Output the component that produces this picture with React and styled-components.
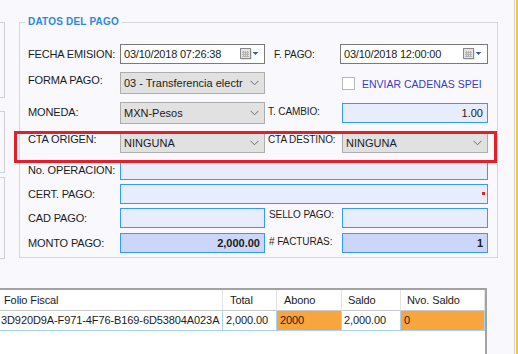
import React from "react";
import styled, { createGlobalStyle } from "styled-components";

const GlobalStyle = createGlobalStyle`
  html, body {
    margin: 0;
    padding: 0;
    background: #f9f9fd;
  }
  body {
    font-family: "Liberation Sans", Arial, sans-serif;
    font-size: 11px;
    color: #1b1b1b;
    overflow: hidden;
  }
`;

const Page = styled.div`
  display: flex;
  width: 518px;
  height: 354px;
  overflow: hidden;
`;

const Main = styled.div`
  width: 514px;
  display: flex;
  flex-direction: column;
`;

const EdgeRule = styled.div`
  width: 1px;
  background: #d4d4d8;
  margin-right: 1px;
`;

const YellowEdge = styled.div`
  width: 2px;
  background: #f1c83a;
`;

const TopArea = styled.div`
  display: flex;
  height: 288px;
  padding-top: 15px;
  box-sizing: border-box;
`;

const SidePanels = styled.div`
  width: 5px;
  display: flex;
  flex-direction: column;
  padding-top: 7px;
`;

const SideBox = styled.div`
  box-sizing: border-box;
  width: 5px;
  height: ${(p) => p.$h}px;
  margin-top: ${(p) => p.$gap || 0}px;
  border: 1px solid #cfcfd4;
  border-left: none;
`;

const Fieldset = styled.fieldset`
  margin: 0 0 0 14px;
  padding: 11px 9px 1px 8px;
  border: 1px solid #d6d6da;
  width: 460px;
  min-width: 0;
  align-self: flex-start;
`;

const Legend = styled.legend`
  margin-left: -3px;
  padding: 0 3px;
  line-height: 14px;
  font-size: 10px;
  font-weight: bold;
  letter-spacing: 0.2px;
  color: #2f86e0;
`;

const Grid = styled.div`
  position: relative;
  display: grid;
  grid-template-columns: 92px 145px 77px 146px;
  grid-template-rows: 28px 29px 31px 30px 23px 25px 24px 26px;
  align-items: center;
`;

const Label = styled.span`
  white-space: nowrap;
  padding-left: ${(p) => p.$indent || 0}px;
  margin-bottom: ${(p) => p.$lift || 0}px;
  font-size: ${(p) => (p.$small ? 10 : 11)}px;
  letter-spacing: ${(p) => (p.$small ? -0.1 : -0.15)}px;
`;

const DateBox = styled.div`
  box-sizing: border-box;
  height: 20px;
  margin-left: ${(p) => (p.$pull ? -2 : 0)}px;
  display: flex;
  align-items: center;
  padding: 0 5px 0 3px;
  background: #ffffff;
  border: 1px solid #7a7a7a;
  letter-spacing: -0.2px;
`;

const DateText = styled.span`
  flex: 1;
`;

const Select = styled.div`
  box-sizing: border-box;
  height: ${(p) => p.$h || 22}px;
  display: flex;
  align-items: center;
  justify-content: space-between;
  padding: 0 5px 0 3px;
  background: #e1e1e1;
  border: 1px solid #adadad;
  overflow: hidden;
  white-space: nowrap;
`;

const SelectText = styled.span`
  overflow: hidden;
`;

const TextBox = styled.div`
  box-sizing: border-box;
  height: 20px;
  grid-column: ${(p) => p.$span || "auto"};
  display: flex;
  align-items: center;
  justify-content: flex-end;
  padding: 0 4px;
  background: ${(p) => (p.$strong ? "#ccd6f8" : "#e7edfc")};
  border: 1px solid #3399ff;
  font-weight: ${(p) => (p.$strong ? "bold" : "normal")};
`;

const ErrorDot = styled.span`
  width: 3px;
  height: 3px;
  background: #e3202a;
  margin-right: -2px;
`;

const CheckRow = styled.label`
  grid-column: 3 / 5;
  justify-self: end;
  width: 146px;
  display: flex;
  align-items: center;
  gap: 7px;
  color: #3a3ad0;
  font-size: 10.5px;
  margin-top: 2px;
`;

const CheckBox = styled.span`
  box-sizing: border-box;
  width: 13px;
  height: 13px;
  background: #ffffff;
  border: 1px solid #b8b8b8;
`;

const Highlight = styled.div`
  position: absolute;
  left: -14px;
  top: 91px;
  width: 483px;
  height: 32px;
  box-sizing: border-box;
  border: 3px solid #e3202a;
  pointer-events: none;
`;

const Table = styled.div`
  width: 487px;
  flex: 1;
  box-sizing: border-box;
  background: #ffffff;
  border-top: 2px solid #a3a3a3;
  border-right: 2px solid #a3a3a3;
  letter-spacing: -0.1px;
`;

const Row = styled.div`
  display: grid;
  grid-template-columns: 223px 54px 65px 59px 84px;
`;

const HeadCell = styled.div`
  box-sizing: border-box;
  height: 21px;
  line-height: 20px;
  padding-left: ${(p) => p.$pad}px;
  border-right: 1px solid #e2e2e2;
  border-bottom: 1px solid #c9c9c9;
  white-space: nowrap;
`;

const Cell = styled.div`
  box-sizing: border-box;
  height: 20px;
  line-height: 19px;
  padding-left: ${(p) => p.$pad}px;
  background: ${(p) => (p.$hot ? "#f8a53d" : "#ffffff")};
  border-right: 1px solid #a9d3f5;
  border-bottom: 1px solid #a9d3f5;
  white-space: nowrap;
  overflow: hidden;
`;

const CalendarIcon = () => (
  <svg width="19" height="12" viewBox="0 0 19 12">
    <rect x="1.5" y="1.5" width="10" height="10" fill="#9a9a9a" opacity="0.5" />
    <rect x="0.5" y="0.5" width="10" height="10" fill="#e4e4e4" stroke="#8a8a8a" />
    <path d="M3.5 3v6M5.5 3v6M7.5 3v6M2 4.5h7M2 6.5h7M2 8.5h7" stroke="#b4b4b4" strokeWidth="1" />
    <path d="M12.5 4h6l-3 3z" fill="#3d5f94" />
  </svg>
);

const Chevron = () => (
  <svg width="9" height="6" viewBox="0 0 9 6">
    <path d="M0.5 0.8L4.5 4.8L8.5 0.8" fill="none" stroke="#6a6a6a" strokeWidth="1" />
  </svg>
);

const facturas = [
  {
    folio: "3D920D9A-F971-4F76-B169-6D53804A023A",
    total: "2,000.00",
    abono: "2000",
    saldo: "2,000.00",
    nuevo: "0",
  },
];

export default function App() {
  return (
    <Page>
      <GlobalStyle />
      <Main>
        <TopArea>
          <SidePanels>
            <SideBox $h={76} />
            <SideBox $h={62} $gap={13} />
            <SideBox $h={82} $gap={4} />
          </SidePanels>
          <Fieldset>
            <Legend>DATOS DEL PAGO</Legend>
            <Grid>
              <Label>FECHA EMISION:</Label>
              <DateBox>
                <DateText>03/10/2018 07:26:38</DateText>
                <CalendarIcon />
              </DateBox>
              <Label $small $indent={9}>F. PAGO:</Label>
              <DateBox $pull>
                <DateText>03/10/2018 12:00:00</DateText>
                <CalendarIcon />
              </DateBox>

              <Label $lift={5}>FORMA PAGO:</Label>
              <Select>
                <SelectText>03 - Transferencia electr</SelectText>
                <Chevron />
              </Select>
              <CheckRow>
                <CheckBox />
                ENVIAR CADENAS SPEI
              </CheckRow>

              <Label $lift={2}>MONEDA:</Label>
              <Select>
                <SelectText>MXN-Pesos</SelectText>
                <Chevron />
              </Select>
              <Label $small $indent={3} $lift={3}>T. CAMBIO:</Label>
              <TextBox>1.00</TextBox>

              <Label $lift={9}>CTA ORIGEN:</Label>
              <Select $h={20}>
                <SelectText>NINGUNA</SelectText>
                <Chevron />
              </Select>
              <Label $small $indent={3} $lift={8}>CTA DESTINO:</Label>
              <Select $h={20}>
                <SelectText>NINGUNA</SelectText>
                <Chevron />
              </Select>

              <Label>No. OPERACION:</Label>
              <TextBox $span="2 / 5" />

              <Label>CERT. PAGO:</Label>
              <TextBox $span="2 / 5">
                <ErrorDot />
              </TextBox>

              <Label>CAD PAGO:</Label>
              <TextBox />
              <Label $small $indent={4} $lift={7}>SELLO PAGO:</Label>
              <TextBox />

              <Label>MONTO PAGO:</Label>
              <TextBox $strong>2,000.00</TextBox>
              <Label $small $indent={4} $lift={4}># FACTURAS:</Label>
              <TextBox $strong>1</TextBox>

              <Highlight />
            </Grid>
          </Fieldset>
        </TopArea>

        <Table>
          <Row>
            <HeadCell $pad={4}>Folio Fiscal</HeadCell>
            <HeadCell $pad={7}>Total</HeadCell>
            <HeadCell $pad={7}>Abono</HeadCell>
            <HeadCell $pad={6}>Saldo</HeadCell>
            <HeadCell $pad={6}>Nvo. Saldo</HeadCell>
          </Row>
          {facturas.map((f) => (
            <Row key={f.folio}>
              <Cell $pad={1}>{f.folio}</Cell>
              <Cell $pad={3}>{f.total}</Cell>
              <Cell $pad={3} $hot>{f.abono}</Cell>
              <Cell $pad={2}>{f.saldo}</Cell>
              <Cell $pad={3} $hot>{f.nuevo}</Cell>
            </Row>
          ))}
        </Table>
      </Main>
      <EdgeRule />
      <YellowEdge />
    </Page>
  );
}
